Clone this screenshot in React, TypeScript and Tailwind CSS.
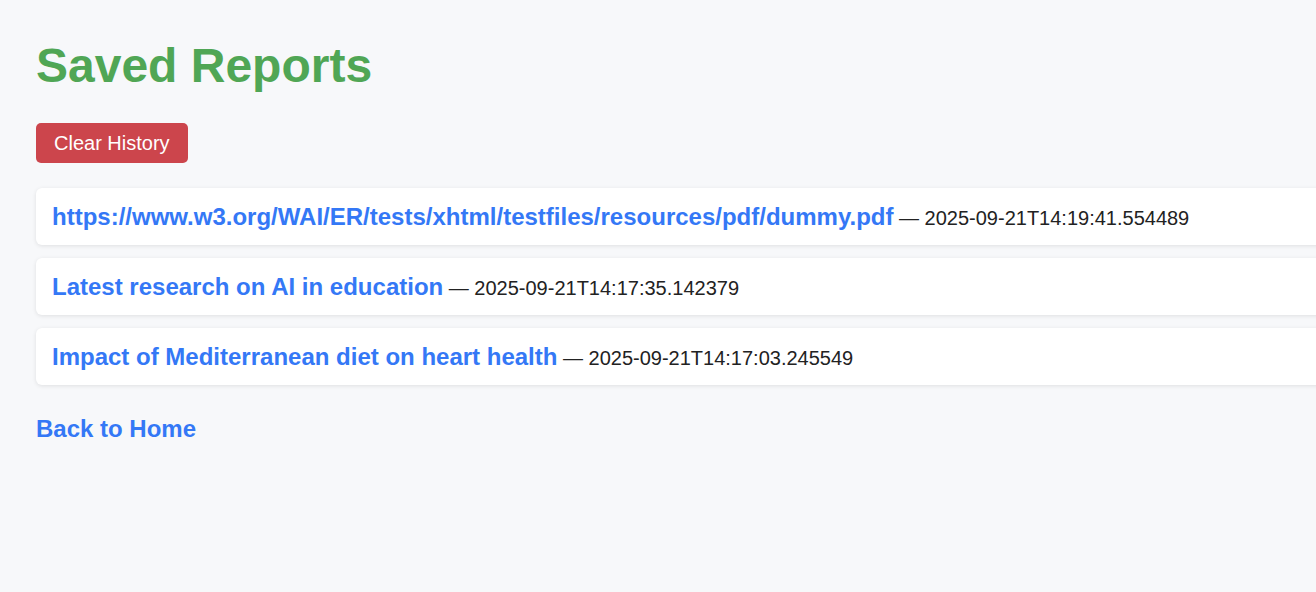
import React from "react";

const reports = [
  {
    title: "https://www.w3.org/WAI/ER/tests/xhtml/testfiles/resources/pdf/dummy.pdf",
    savedAt: "2025-09-21T14:19:41.554489",
  },
  {
    title: "Latest research on AI in education",
    savedAt: "2025-09-21T14:17:35.142379",
  },
  {
    title: "Impact of Mediterranean diet on heart health",
    savedAt: "2025-09-21T14:17:03.245549",
  },
];

const App: React.FC = () => {
  return (
    <div className="min-h-[592px] overflow-hidden bg-[#f7f8fa] font-['Liberation_Sans',Arial,sans-serif] text-[20px] text-[#222]">
      <div className="px-9 pt-[38px] pb-10">
        {/* Heading */}
        <h1 className="text-[48px] font-bold leading-[55px] text-[#50a655]">Saved Reports</h1>

        <button className="mt-[30px] h-10 rounded-[5px] bg-[#cc454c] px-[18px] text-[20px] text-white">
          Clear History
        </button>

        {/* Report list */}
        <ul className="mt-[25px] flex w-[1400px] flex-col gap-[13px]">
          {reports.map((report) => (
            <li
              key={report.savedAt}
              className="flex h-[57px] items-center rounded-[6px] bg-white px-4 shadow-[0_1px_4px_rgba(0,0,0,0.1)]"
            >
              <div className="pt-px">
                <a href="#" className="text-[24px] font-bold text-[#3478f6]">
                  {report.title}
                </a>{" "}
                — {report.savedAt}
              </div>
            </li>
          ))}
        </ul>

        <a href="#" className="mt-[30px] block text-[24px] font-bold leading-[28px] text-[#3478f6]">
          Back to Home
        </a>
      </div>
    </div>
  );
};

export default App;
